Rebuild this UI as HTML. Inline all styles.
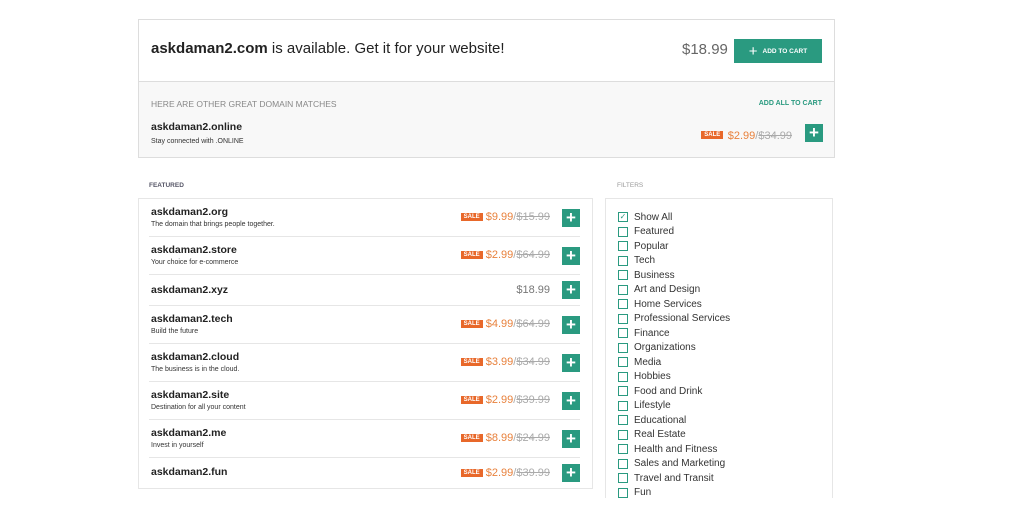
<!DOCTYPE html>
<html><head><meta charset="utf-8"><style>
*{margin:0;padding:0;box-sizing:border-box}
body{width:1024px;height:512px;background:#fff;font-family:"Liberation Sans",sans-serif;position:relative;overflow:hidden;color:#222}
.abs{position:absolute}
.top{left:138px;top:19px;width:697px;height:139px;border:1px solid #ddd;background:#f8f8f8}
.top .hd{height:62px;background:#fff;border-bottom:1px solid #ddd;position:relative}
.btn{background:#2a9a80;color:#fff;display:flex;align-items:center;justify-content:center}
.plus{width:18px;height:18px;font-size:17px;font-weight:bold;line-height:18px;text-align:center}
.sale{background:#e8682a;color:#fff;font-size:6px;padding:1px 3px;font-weight:bold;display:inline-block;vertical-align:middle}
.np{color:#e8813c;font-size:11px}
.op{color:#aaa;font-size:11px;text-decoration:line-through}
.list{left:138px;top:198px;width:455px;height:291px;border:1px solid #e6e6e6}
.row{position:absolute;left:10px;right:12px;border-bottom:1px solid #e6e6e6}
.row b{position:absolute;left:2px;font-size:10.5px;color:#222}
.row .d{position:absolute;left:2px;font-size:7px;color:#333}
.row .pr{position:absolute;right:30px;font-size:11px}
.filt{left:605px;top:198px;width:228px;height:300px;border:1px solid #e6e6e6;border-bottom:none}
.f{position:absolute;left:12px;font-size:10px;color:#333;display:flex;align-items:center}
.cb{width:10px;height:10px;border:1px solid #2a9a80;margin-right:6px;font-size:8px;color:#2a9a80;line-height:8px;text-align:center}
</style></head><body>
<div class="abs top">
 <div class="hd">
  <div class="abs" style="left:12px;top:20px;font-size:15px"><b>askdaman2.com</b> is available. Get it for your website!</div>
  <div class="abs" style="left:543px;top:21px;font-size:15px;color:#666">$18.99</div>
  <div class="abs btn" style="left:595px;top:19px;width:88px;height:24px;font-size:6.5px;font-weight:bold"><span style="font-size:15px;margin-right:5px;font-weight:normal">+</span>ADD TO CART</div>
 </div>
 <div class="abs" style="left:12px;top:79px;font-size:8.5px;color:#888">HERE ARE OTHER GREAT DOMAIN MATCHES</div>
 <div class="abs" style="right:12px;top:80px;font-size:7px;color:#2a9a80;font-weight:bold">ADD ALL TO CART</div>
 <div class="abs" style="left:12px;top:101px;font-size:10.5px;font-weight:bold">askdaman2.online</div>
 <div class="abs" style="left:12px;top:118px;font-size:7px;color:#333">Stay connected with .ONLINE</div>
 <div class="abs" style="right:42px;top:106px"><span class="sale">SALE</span> <span class="np">$2.99</span><span class="op" style="text-decoration:none">/</span><span class="op">$34.99</span></div>
 <div class="abs btn plus" style="left:666px;top:104px">+</div>
</div>
<div class="abs" style="left:149px;top:182px;font-size:6.5px;font-weight:bold;color:#556">FEATURED</div>
<div class="abs" style="left:617px;top:182px;font-size:6.5px;color:#999">FILTERS</div>
<div class="abs list">
 <div class="row" style="top:0;height:38px"><b style="top:7px">askdaman2.org</b><div class="d" style="top:22px">The domain that brings people together.</div><div class="pr" style="top:12px"><span class="sale">SALE</span> <span class="np">$9.99</span><span class="op" style="text-decoration:none">/</span><span class="op">$15.99</span></div><div class="btn plus" style="position:absolute;right:0;top:10px">+</div></div>
 <div class="row" style="top:38px;height:38px"><b style="top:7px">askdaman2.store</b><div class="d" style="top:22px">Your choice for e-commerce</div><div class="pr" style="top:12px"><span class="sale">SALE</span> <span class="np">$2.99</span><span class="op" style="text-decoration:none">/</span><span class="op">$64.99</span></div><div class="btn plus" style="position:absolute;right:0;top:10px">+</div></div>
 <div class="row" style="top:76px;height:31px"><b style="top:9px">askdaman2.xyz</b><div class="pr" style="top:9px;color:#777">$18.99</div><div class="btn plus" style="position:absolute;right:0;top:6px">+</div></div>
 <div class="row" style="top:107px;height:38px"><b style="top:7px">askdaman2.tech</b><div class="d" style="top:22px">Build the future</div><div class="pr" style="top:12px"><span class="sale">SALE</span> <span class="np">$4.99</span><span class="op" style="text-decoration:none">/</span><span class="op">$64.99</span></div><div class="btn plus" style="position:absolute;right:0;top:10px">+</div></div>
 <div class="row" style="top:145px;height:38px"><b style="top:7px">askdaman2.cloud</b><div class="d" style="top:22px">The business is in the cloud.</div><div class="pr" style="top:12px"><span class="sale">SALE</span> <span class="np">$3.99</span><span class="op" style="text-decoration:none">/</span><span class="op">$34.99</span></div><div class="btn plus" style="position:absolute;right:0;top:10px">+</div></div>
 <div class="row" style="top:183px;height:38px"><b style="top:7px">askdaman2.site</b><div class="d" style="top:22px">Destination for all your content</div><div class="pr" style="top:12px"><span class="sale">SALE</span> <span class="np">$2.99</span><span class="op" style="text-decoration:none">/</span><span class="op">$39.99</span></div><div class="btn plus" style="position:absolute;right:0;top:10px">+</div></div>
 <div class="row" style="top:221px;height:38px"><b style="top:7px">askdaman2.me</b><div class="d" style="top:22px">Invest in yourself</div><div class="pr" style="top:12px"><span class="sale">SALE</span> <span class="np">$8.99</span><span class="op" style="text-decoration:none">/</span><span class="op">$24.99</span></div><div class="btn plus" style="position:absolute;right:0;top:10px">+</div></div>
 <div class="row" style="top:259px;height:31px;border:none"><b style="top:8px">askdaman2.fun</b><div class="pr" style="top:9px"><span class="sale">SALE</span> <span class="np">$2.99</span><span class="op" style="text-decoration:none">/</span><span class="op">$39.99</span></div><div class="btn plus" style="position:absolute;right:0;top:6px">+</div></div>
</div>
<div class="abs filt">
 <div class="f" style="top:12.5px"><div class="cb">✓</div>Show All</div>
 <div class="f" style="top:27px"><div class="cb"></div>Featured</div>
 <div class="f" style="top:41.5px"><div class="cb"></div>Popular</div>
 <div class="f" style="top:56px"><div class="cb"></div>Tech</div>
 <div class="f" style="top:70.5px"><div class="cb"></div>Business</div>
 <div class="f" style="top:85px"><div class="cb"></div>Art and Design</div>
 <div class="f" style="top:99.5px"><div class="cb"></div>Home Services</div>
 <div class="f" style="top:114px"><div class="cb"></div>Professional Services</div>
 <div class="f" style="top:128.5px"><div class="cb"></div>Finance</div>
 <div class="f" style="top:143px"><div class="cb"></div>Organizations</div>
 <div class="f" style="top:157.5px"><div class="cb"></div>Media</div>
 <div class="f" style="top:172px"><div class="cb"></div>Hobbies</div>
 <div class="f" style="top:186.5px"><div class="cb"></div>Food and Drink</div>
 <div class="f" style="top:201px"><div class="cb"></div>Lifestyle</div>
 <div class="f" style="top:215.5px"><div class="cb"></div>Educational</div>
 <div class="f" style="top:230px"><div class="cb"></div>Real Estate</div>
 <div class="f" style="top:244.5px"><div class="cb"></div>Health and Fitness</div>
 <div class="f" style="top:259px"><div class="cb"></div>Sales and Marketing</div>
 <div class="f" style="top:273.5px"><div class="cb"></div>Travel and Transit</div>
 <div class="f" style="top:288px"><div class="cb"></div>Fun</div>
</div>
</body></html>
